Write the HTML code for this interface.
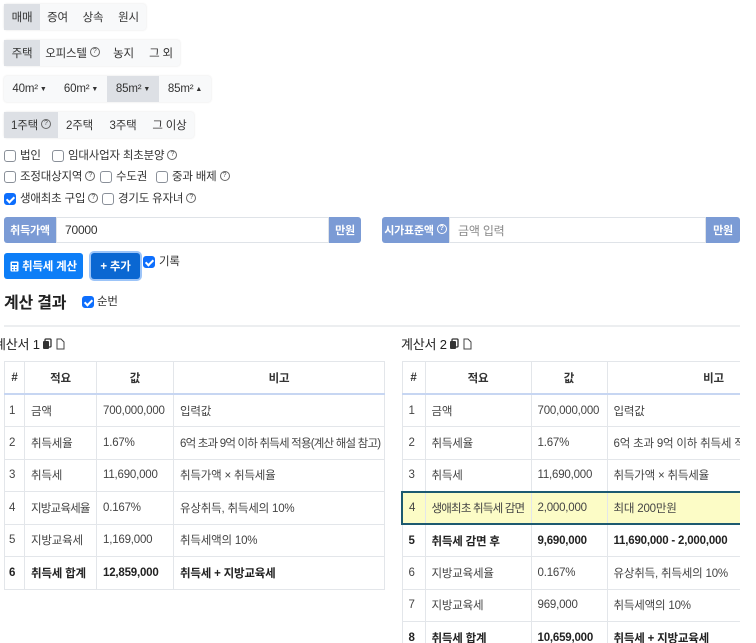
<!DOCTYPE html>
<html><head><meta charset="utf-8"><style>
*{box-sizing:border-box;margin:0;padding:0}
body{width:756px;height:643px;overflow:hidden;background:#fff;font-family:"Liberation Sans","Noto Sans CJK KR",sans-serif;font-size:12px;color:#333;position:relative;letter-spacing:-0.2px}
.a{position:absolute}
.g{position:absolute;display:flex;height:26px;background:#f8f9fa;border-radius:3px;box-shadow:0 0 2px rgba(0,0,0,.12)}
.g div{display:flex;align-items:center;justify-content:center;height:26px;font-size:11.5px;color:#333}
.g .on{background:#dde0e5}
.q{display:inline-block;vertical-align:middle;width:10px;height:10px;border:1px solid #666;border-radius:50%;font-size:7px;line-height:8px;text-align:center;margin-left:3px;color:#555;letter-spacing:0;position:relative;top:-1px}
.cb{position:absolute;width:12px;height:12px;border:1px solid #8a9099;border-radius:3px;background:#fff}
.cb.c{background:#0d6efd;border-color:#0d6efd}
.cb.c:after{content:"";position:absolute;left:3px;top:1px;width:3px;height:6px;border:solid #fff;border-width:0 2px 2px 0;transform:rotate(45deg)}
.t{position:absolute;font-size:11.5px;line-height:14px;white-space:nowrap}
.lab{position:absolute;background:#7b9bd5;color:#fff;display:flex;align-items:center;justify-content:center;font-size:11px;font-weight:bold;height:26px}
.inp{position:absolute;height:26px;border:1px solid #dfe3e8;background:#fff;padding-left:8px;display:flex;align-items:center;font-size:12px}
table{position:absolute;border-collapse:collapse;font-size:11.5px;table-layout:fixed}
td,th{border:1px solid #e3e6ea;height:32.5px;padding:0 6px;white-space:nowrap;overflow:hidden;text-align:left;font-weight:normal;color:#444}
th{font-weight:bold;text-align:center;color:#333;border-bottom:2px solid #c7d6f2}
tr.b td{font-weight:bold;color:#222}
tr.h td{background:#fcfcc6;border-top:2px solid #1d5a70;border-bottom:2px solid #1d5a70}
tr.h td:first-child{border-left:2px solid #1d5a70}
tr.h td:last-child{border-right:2px solid #1d5a70}
.k{letter-spacing:-0.6px}
</style></head><body>
<div class="g" style="left:4px;top:4px"><div class="on" style="width:36px">매매</div><div style="width:35px">증여</div><div style="width:36px">상속</div><div style="width:35px">원시</div></div>
<div class="g" style="left:4px;top:40px"><div class="on" style="width:36px">주택</div><div style="width:65px">오피스텔<span class="q">?</span></div><div style="width:37px">농지</div><div style="width:38px">그 외</div></div>
<div class="g" style="left:4px;top:76px"><div style="width:51px">40m² <small style="font-size:7px;margin-left:2px">▼</small></div><div style="width:52px">60m² <small style="font-size:7px;margin-left:2px">▼</small></div><div class="on" style="width:52px">85m² <small style="font-size:7px;margin-left:2px">▼</small></div><div style="width:52px">85m² <small style="font-size:7px;margin-left:2px">▲</small></div></div>
<div class="g" style="left:4px;top:112px"><div class="on" style="width:54px">1주택<span class="q">?</span></div><div style="width:43px">2주택</div><div style="width:44px">3주택</div><div style="width:49px">그 이상</div></div>

<div class="cb" style="left:4px;top:150px"></div><div class="t" style="left:20px;top:149px">법인</div>
<div class="cb" style="left:52px;top:150px"></div><div class="t" style="left:68px;top:149px">임대사업자 최초분양<span class="q">?</span></div>
<div class="cb" style="left:4px;top:171px"></div><div class="t" style="left:20px;top:170px">조정대상지역<span class="q">?</span></div>
<div class="cb" style="left:100px;top:171px"></div><div class="t" style="left:116px;top:170px">수도권</div>
<div class="cb" style="left:156px;top:171px"></div><div class="t" style="left:172px;top:170px">중과 배제<span class="q">?</span></div>
<div class="cb c" style="left:4px;top:193px"></div><div class="t" style="left:20px;top:192px">생애최초 구입<span class="q">?</span></div>
<div class="cb" style="left:102px;top:193px"></div><div class="t" style="left:118px;top:192px">경기도 유자녀<span class="q">?</span></div>

<div class="lab" style="left:4px;top:217px;width:52px;border-radius:3px 0 0 3px">취득가액</div>
<div class="inp" style="left:56px;top:217px;width:273px">70000</div>
<div class="lab" style="left:329px;top:217px;width:32px;border-radius:0 3px 3px 0">만원</div>
<div class="lab" style="left:382px;top:217px;width:67px;border-radius:3px 0 0 3px">시가표준액<span class="q" style="border-color:#fff;color:#fff">?</span></div>
<div class="inp" style="left:449px;top:217px;width:257px;color:#888">금액 입력</div>
<div class="lab" style="left:706px;top:217px;width:34px;border-radius:0 3px 3px 0">만원</div>

<div class="a" style="left:4px;top:253px;width:79px;height:26px;background:#0d7ef7;color:#fff;border-radius:3px;display:flex;align-items:center;justify-content:center;font-weight:bold;font-size:11.5px">
<svg width="9" height="11" viewBox="0 0 9 11" style="margin-right:3px"><rect x="0.5" y="0.5" width="8" height="10" rx="1" fill="#fff"/><rect x="2" y="2" width="5" height="2" fill="#0d7ef7"/><rect x="2" y="5.5" width="1.5" height="1.5" fill="#0d7ef7"/><rect x="5" y="5.5" width="1.5" height="1.5" fill="#0d7ef7"/><rect x="2" y="8" width="1.5" height="1.5" fill="#0d7ef7"/><rect x="5" y="8" width="1.5" height="1.5" fill="#0d7ef7"/></svg>취득세 계산</div>
<div class="a" style="left:91px;top:253px;width:49px;height:26px;background:#0a67d2;color:#fff;border-radius:3px;display:flex;align-items:center;justify-content:center;font-weight:bold;font-size:11.5px;box-shadow:0 0 0 2px #9cc4f8">+ 추가</div>
<div class="cb c" style="left:143px;top:256px"></div><div class="t" style="left:159px;top:255px">기록</div>

<div class="t" style="left:4px;top:295px;font-size:16px;line-height:18px;font-weight:bold;color:#222">계산 결과</div>
<div class="cb c" style="left:82px;top:296px"></div><div class="t" style="left:97px;top:295px">순번</div>
<div class="a" style="left:4px;top:325px;width:736px;height:2px;background:#eceef0"></div>

<div class="t" style="left:-6px;top:338px;font-size:13px;color:#222">계산서 1<svg width="24" height="12" viewBox="0 0 24 12" style="margin-left:2px;vertical-align:-1px"><rect x="3" y="1" width="6" height="8" rx="1" fill="none" stroke="#333" stroke-width="1.3"/><rect x="1" y="3" width="6" height="8" rx="1" fill="#333"/><path d="M15 1h4l3 3v7h-7z" fill="none" stroke="#444" stroke-width="1"/></svg></div>
<div class="t" style="left:401px;top:338px;font-size:13px;color:#222">계산서 2<svg width="24" height="12" viewBox="0 0 24 12" style="margin-left:2px;vertical-align:-1px"><rect x="3" y="1" width="6" height="8" rx="1" fill="none" stroke="#333" stroke-width="1.3"/><rect x="1" y="3" width="6" height="8" rx="1" fill="#333"/><path d="M15 1h4l3 3v7h-7z" fill="none" stroke="#444" stroke-width="1"/></svg></div>

<table style="left:4px;top:361px;width:381px">
<colgroup><col style="width:20px"><col style="width:72px"><col style="width:77px"><col></colgroup>
<tr><th style="padding:0 4px">#</th><th>적요</th><th>값</th><th>비고</th></tr>
<tr><td style="padding:0 4px">1</td><td>금액</td><td>700,000,000</td><td>입력값</td></tr>
<tr><td style="padding:0 4px">2</td><td>취득세율</td><td>1.67%</td><td style="letter-spacing:-0.8px">6억 초과 9억 이하 취득세 적용(계산 해설 참고)</td></tr>
<tr><td style="padding:0 4px">3</td><td>취득세</td><td>11,690,000</td><td>취득가액 × 취득세율</td></tr>
<tr><td style="padding:0 4px">4</td><td style="letter-spacing:-0.8px">지방교육세율</td><td>0.167%</td><td>유상취득, 취득세의 10%</td></tr>
<tr><td style="padding:0 4px">5</td><td>지방교육세</td><td>1,169,000</td><td>취득세액의 10%</td></tr>
<tr class="b"><td style="padding:0 4px">6</td><td>취득세 합계</td><td>12,859,000</td><td>취득세 + 지방교육세</td></tr>
</table>

<div class="a" style="left:401px;top:361px;width:339px;height:282px;overflow:hidden">
<table style="left:0;top:0;width:420px">
<colgroup><col style="width:23px"><col style="width:106px"><col style="width:76px"><col></colgroup>
<tr><th>#</th><th>적요</th><th>값</th><th>비고</th></tr>
<tr><td>1</td><td>금액</td><td>700,000,000</td><td>입력값</td></tr>
<tr><td>2</td><td>취득세율</td><td>1.67%</td><td>6억 초과 9억 이하 취득세 적용</td></tr>
<tr><td>3</td><td>취득세</td><td>11,690,000</td><td>취득가액 × 취득세율</td></tr>
<tr class="h"><td>4</td><td style="letter-spacing:-0.8px">생애최초 취득세 감면</td><td>2,000,000</td><td>최대 200만원</td></tr>
<tr class="b"><td>5</td><td>취득세 감면 후</td><td>9,690,000</td><td>11,690,000 - 2,000,000</td></tr>
<tr><td>6</td><td>지방교육세율</td><td>0.167%</td><td>유상취득, 취득세의 10%</td></tr>
<tr><td>7</td><td>지방교육세</td><td>969,000</td><td>취득세액의 10%</td></tr>
<tr class="b"><td>8</td><td>취득세 합계</td><td>10,659,000</td><td>취득세 + 지방교육세</td></tr>
</table></div>
</body></html>
